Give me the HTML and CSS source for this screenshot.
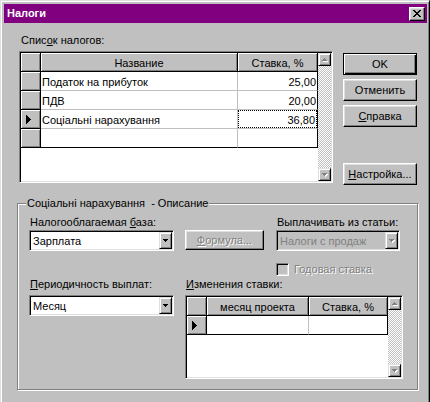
FILE: index.html
```html
<!DOCTYPE html>
<html>
<head>
<meta charset="utf-8">
<title>Налоги</title>
<link rel="stylesheet" href="styles.css">
</head>
<body>
<div class="window">
  <div class="titlebar">
    <span class="title">Налоги</span>
    <span class="close"><svg width="8" height="7" viewBox="0 0 8 7" shape-rendering="crispEdges"><path fill="#000" d="M0 0h2v1H0zM6 0h2v1H6zM1 1h2v1H1zM5 1h2v1H5zM2 2h4v1H2zM3 3h2v1H3zM2 4h4v1H2zM1 5h2v1H1zM5 5h2v1H5zM0 6h2v1H0zM6 6h2v1H6z"/></svg></span>
  </div>

  <div class="top">
    <div class="list-col">
      <div class="label">Спис<u>о</u>к налогов:</div>
      <div class="grid grid1">
        <div class="gdata">
          <div class="row head">
            <div class="cell fixed ind"></div>
            <div class="cell fixed c-name center">Название</div>
            <div class="cell fixed c-rate center">Ставка, %</div>
          </div>
          <div class="row">
            <div class="cell fixed ind"></div>
            <div class="cell c-name">Податок на прибуток</div>
            <div class="cell c-rate num">25,00</div>
          </div>
          <div class="row">
            <div class="cell fixed ind"></div>
            <div class="cell c-name">ПДВ</div>
            <div class="cell c-rate num">20,00</div>
          </div>
          <div class="row">
            <div class="cell fixed ind"><svg class="marker" width="5" height="9" viewBox="0 0 5 9" shape-rendering="crispEdges"><path fill="#000" d="M0 0h1v9H0zM1 1h1v7H1zM2 2h1v5H2zM3 3h1v3H3zM4 4h1v1H4z"/></svg></div>
            <div class="cell c-name">Соціальні нарахування</div>
            <div class="cell c-rate num focus"><span class="focus-box">36,80</span></div>
          </div>
          <div class="row last">
            <div class="cell fixed ind"></div>
            <div class="cell c-name"></div>
            <div class="cell c-rate"></div>
          </div>
        </div>
        <div class="vscroll">
          <div class="sbtn"><svg width="7" height="5" viewBox="0 0 7 5" shape-rendering="crispEdges"><path fill="#fff" d="M3 1h1v1H3zM2 2h3v1H2zM1 3h5v1H1z" transform="translate(1 1)"/><path fill="#808080" d="M3 1h1v1H3zM2 2h3v1H2zM1 3h5v1H1z"/></svg></div>
          <div class="track"></div>
          <div class="sbtn"><svg width="7" height="5" viewBox="0 0 7 5" shape-rendering="crispEdges"><path fill="#fff" d="M1 1h5v1H1zM2 2h3v1H2zM3 3h1v1H3z" transform="translate(1 1)"/><path fill="#808080" d="M1 1h5v1H1zM2 2h3v1H2zM3 3h1v1H3z"/></svg></div>
        </div>
      </div>
    </div>
    <div class="buttons">
      <div class="btn default">OK</div>
      <div class="btn">Отменить</div>
      <div class="btn"><u>С</u>правка</div>
      <div class="btn settings"><u>Н</u>астройка...</div>
    </div>
  </div>

  <div class="group">
    <span class="legend">Соціальні нарахування&nbsp; - Описание</span>
    <div class="g-top">
      <div class="col-a">
        <div class="label">Налогооблагаемая <u>б</u>аза:</div>
        <div class="combo">
          <span class="combo-text">Зарплата</span>
          <span class="drop"><svg width="5" height="3" viewBox="0 0 5 3" shape-rendering="crispEdges"><path fill="#000" d="M0 0h5v1H0zM1 1h3v1H1zM2 2h1v1H2z"/></svg></span>
        </div>
      </div>
      <div class="col-b">
        <div class="btn formula disabled"><u>Ф</u>ормула...</div>
      </div>
      <div class="col-c">
        <div class="label">Выплачивать из статьи:</div>
        <div class="combo off">
          <span class="combo-text">Налоги с продаж</span>
          <span class="drop"><svg width="6" height="4" viewBox="0 0 6 4" shape-rendering="crispEdges"><path fill="#fff" d="M0 0h5v1H0zM1 1h3v1H1zM2 2h1v1H2z" transform="translate(1 1)"/><path fill="#808080" d="M0 0h5v1H0zM1 1h3v1H1zM2 2h1v1H2z"/></svg></span>
        </div>
        <div class="check-row">
          <span class="checkbox"></span>
          <span class="check-label">Годовая ставка</span>
        </div>
      </div>
    </div>
    <div class="g-bottom">
      <div class="col-a">
        <div class="label"><u>П</u>ериодичность выплат:</div>
        <div class="combo">
          <span class="combo-text">Месяц</span>
          <span class="drop"><svg width="5" height="3" viewBox="0 0 5 3" shape-rendering="crispEdges"><path fill="#000" d="M0 0h5v1H0zM1 1h3v1H1zM2 2h1v1H2z"/></svg></span>
        </div>
      </div>
      <div class="col-d">
        <div class="label"><u>И</u>зменения ставки:</div>
        <div class="grid grid2">
          <div class="gdata">
            <div class="row head">
              <div class="cell fixed ind"></div>
              <div class="cell fixed c-month center">месяц проекта</div>
              <div class="cell fixed c-rate2 center">Ставка, %</div>
            </div>
            <div class="row last">
              <div class="cell fixed ind"><svg class="marker" width="5" height="9" viewBox="0 0 5 9" shape-rendering="crispEdges"><path fill="#000" d="M0 0h1v9H0zM1 1h1v7H1zM2 2h1v5H2zM3 3h1v3H3zM4 4h1v1H4z"/></svg></div>
              <div class="cell c-month"></div>
              <div class="cell c-rate2"></div>
            </div>
          </div>
          <div class="vscroll">
            <div class="sbtn"><svg width="7" height="5" viewBox="0 0 7 5" shape-rendering="crispEdges"><path fill="#fff" d="M3 1h1v1H3zM2 2h3v1H2zM1 3h5v1H1z" transform="translate(1 1)"/><path fill="#808080" d="M3 1h1v1H3zM2 2h3v1H2zM1 3h5v1H1z"/></svg></div>
            <div class="track"></div>
            <div class="sbtn"><svg width="7" height="5" viewBox="0 0 7 5" shape-rendering="crispEdges"><path fill="#fff" d="M1 1h5v1H1zM2 2h3v1H2zM3 3h1v1H3z" transform="translate(1 1)"/><path fill="#808080" d="M1 1h5v1H1zM2 2h3v1H2zM3 3h1v1H3z"/></svg></div>
          </div>
        </div>
      </div>
    </div>
  </div>
</div>
</body>
</html>
```

FILE: styles.css
```css
* { box-sizing: border-box; }
html, body { margin: 0; padding: 0; }
body {
  width: 430px;
  height: 402px;
  overflow: hidden;
  background: #c0c0c0;
  font-family: "Liberation Sans", Arial, sans-serif;
  font-size: 11px;
  color: #000;
}
u { text-decoration: underline; text-underline-offset: 1px; }

.window {
  width: 430px;
  height: 410px;
  background: #c0c0c0;
  border: 1px solid;
  border-color: #dfdfdf #000 #000 #dfdfdf;
  box-shadow: inset 1px 1px #fff, inset -1px -1px #808080;
  padding: 3px 2px 2px 3px;
}

.titlebar {
  height: 19px;
  background: #800080;
  display: flex;
  align-items: center;
  justify-content: space-between;
  padding: 0 2px 0 3px;
}
.title {
  color: #fff;
  font-weight: bold;
  line-height: 19px;
}
.close {
  width: 16px;
  height: 14px;
  background: #c0c0c0;
  border: 1px solid;
  border-color: #fff #000 #000 #fff;
  box-shadow: inset -1px -1px #808080, inset 1px 1px #dfdfdf;
  display: flex;
  align-items: center;
  justify-content: center;
  padding-right: 1px;
}
.close svg { display: block; }

.label {
  height: 13px;
  line-height: 13px;
  padding-left: 1px;
  white-space: nowrap;
}

/* top section */
.top {
  display: flex;
  margin-top: 11px;
  height: 151px;
}
.list-col { margin-left: 15px; }
.list-col > .label { padding-left: 2px; margin-bottom: 4px; }

.grid {
  display: flex;
  background: #fff;
  border: 1px solid;
  border-color: #808080 #fff #fff #808080;
  box-shadow: inset 1px 1px #000, inset -1px -1px #dfdfdf;
  padding: 1px;
}
.grid1 { width: 314px; height: 132px; }
.gdata { flex: 1; background: #fff; }
.row { display: flex; height: 19px; }
.cell {
  height: 19px;
  padding: 2px 1px 0 1px;
  line-height: 16px;
  border-right: 1px solid #c0c0c0;
  border-bottom: 1px solid #c0c0c0;
  white-space: nowrap;
  overflow: hidden;
}
.cell.fixed {
  background: #c0c0c0;
  box-shadow: inset 1px 1px #fff, inset -1px -1px #808080;
  border-right-color: #000;
  border-bottom-color: #000;
}
.row.head .cell { border-bottom-color: #000; }
.row.last .cell { border-bottom-color: #000; }
.ind { width: 20px; padding: 0; display: flex; align-items: center; }
.marker { display: block; margin-left: 5px; }
.c-name { width: 197px; }
.c-rate { width: 80px; }
.c-month { width: 102px; }
.c-rate2 { width: 79px; }
.row .cell.c-rate, .row .cell.c-rate2 { border-right-color: #000; }
.center { text-align: center; }
.num { text-align: right; padding-right: 1px; }
.focus { padding: 0; }
.focus-box {
  display: block;
  height: 18px;
  border: 1px dotted #000;
  padding: 1px 1px 0 0;
  line-height: 16px;
}

.vscroll {
  width: 13px;
  display: flex;
  flex-direction: column;
}
.sbtn {
  width: 13px;
  height: 13px;
  background: #c0c0c0;
  border: 1px solid;
  border-color: #dfdfdf #000 #000 #dfdfdf;
  box-shadow: inset 1px 1px #fff, inset -1px -1px #808080;
  display: flex;
  align-items: center;
  justify-content: center;
}
.sbtn svg { display: block; }
.track {
  flex: 1;
  background-color: #fff;
  background-image: repeating-conic-gradient(#c0c0c0 0 25%, #fff 0 50%);
  background-size: 2px 2px;
}

/* buttons */
.buttons {
  margin-left: 10px;
  margin-top: 19px;
  width: 74px;
  display: flex;
  flex-direction: column;
  gap: 4px;
}
.btn {
  height: 22px;
  line-height: 20px;
  text-align: center;
  background: #c0c0c0;
  border: 1px solid;
  border-color: #fff #000 #000 #fff;
  box-shadow: inset -1px -1px #808080, inset 1px 1px #dfdfdf;
  white-space: nowrap;
}
.btn.default {
  border-color: #000;
  box-shadow: inset 1px 1px #fff, inset -1px -1px #000, inset -2px -2px #808080;
}
.btn.settings { margin-top: 32px; }
.disabled {
  color: #808080;
  text-shadow: 1px 1px #fff;
}

/* group box */
.group {
  position: relative;
  margin-top: 18px;
  margin-left: 13px;
  width: 401px;
  height: 187px;
  border: 1px solid #808080;
  box-shadow: inset 1px 1px #fff, 1px 1px #fff;
  padding: 12px 0 0 11px;
}
.legend {
  position: absolute;
  top: -7px;
  left: 8px;
  line-height: 13px;
  padding: 0 1px;
  background: #c0c0c0;
  white-space: nowrap;
}
.g-top { display: flex; height: 60px; }
.col-a { width: 145px; }
.col-a > .label { margin-bottom: 1px; }
.col-b { width: 79px; margin-left: 11px; padding-top: 14px; }
.formula { height: 20px; line-height: 18px; }
.col-c { width: 124px; margin-left: 12px; }
.col-c > .label { margin-bottom: 1px; }

.combo {
  height: 21px;
  display: flex;
  background: #fff;
  border: 1px solid;
  border-color: #808080 #fff #fff #808080;
  box-shadow: inset 1px 1px #000, inset -1px -1px #dfdfdf;
  padding: 1px;
}
.combo-text {
  flex: 1;
  padding: 1px 0 0 2px;
  line-height: 16px;
  white-space: nowrap;
}
.combo.off { background: #c0c0c0; }
.combo.off .combo-text { color: #808080; }
.drop {
  width: 13px;
  height: 17px;
  background: #c0c0c0;
  border: 1px solid;
  border-color: #dfdfdf #000 #000 #dfdfdf;
  box-shadow: inset 1px 1px #fff, inset -1px -1px #808080;
  display: flex;
  align-items: center;
  justify-content: center;
}
.drop svg { display: block; }

.check-row {
  display: flex;
  align-items: center;
  margin-top: 12px;
  height: 13px;
}
.checkbox {
  width: 13px;
  height: 13px;
  background: #c0c0c0;
  border: 1px solid;
  border-color: #808080 #fff #fff #808080;
  box-shadow: inset 1px 1px #000, inset -1px -1px #dfdfdf;
}
.check-label {
  margin-left: 5px;
  line-height: 13px;
  color: #808080;
  text-shadow: 1px 1px #fff;
}

.g-bottom { display: flex; margin-top: 2px; }
.g-bottom .col-a > .label { margin-bottom: 4px; }
.col-d { width: 218px; margin-left: 11px; }
.col-d > .label { margin-bottom: 4px; }
.grid2 { width: 218px; height: 84px; }
```
